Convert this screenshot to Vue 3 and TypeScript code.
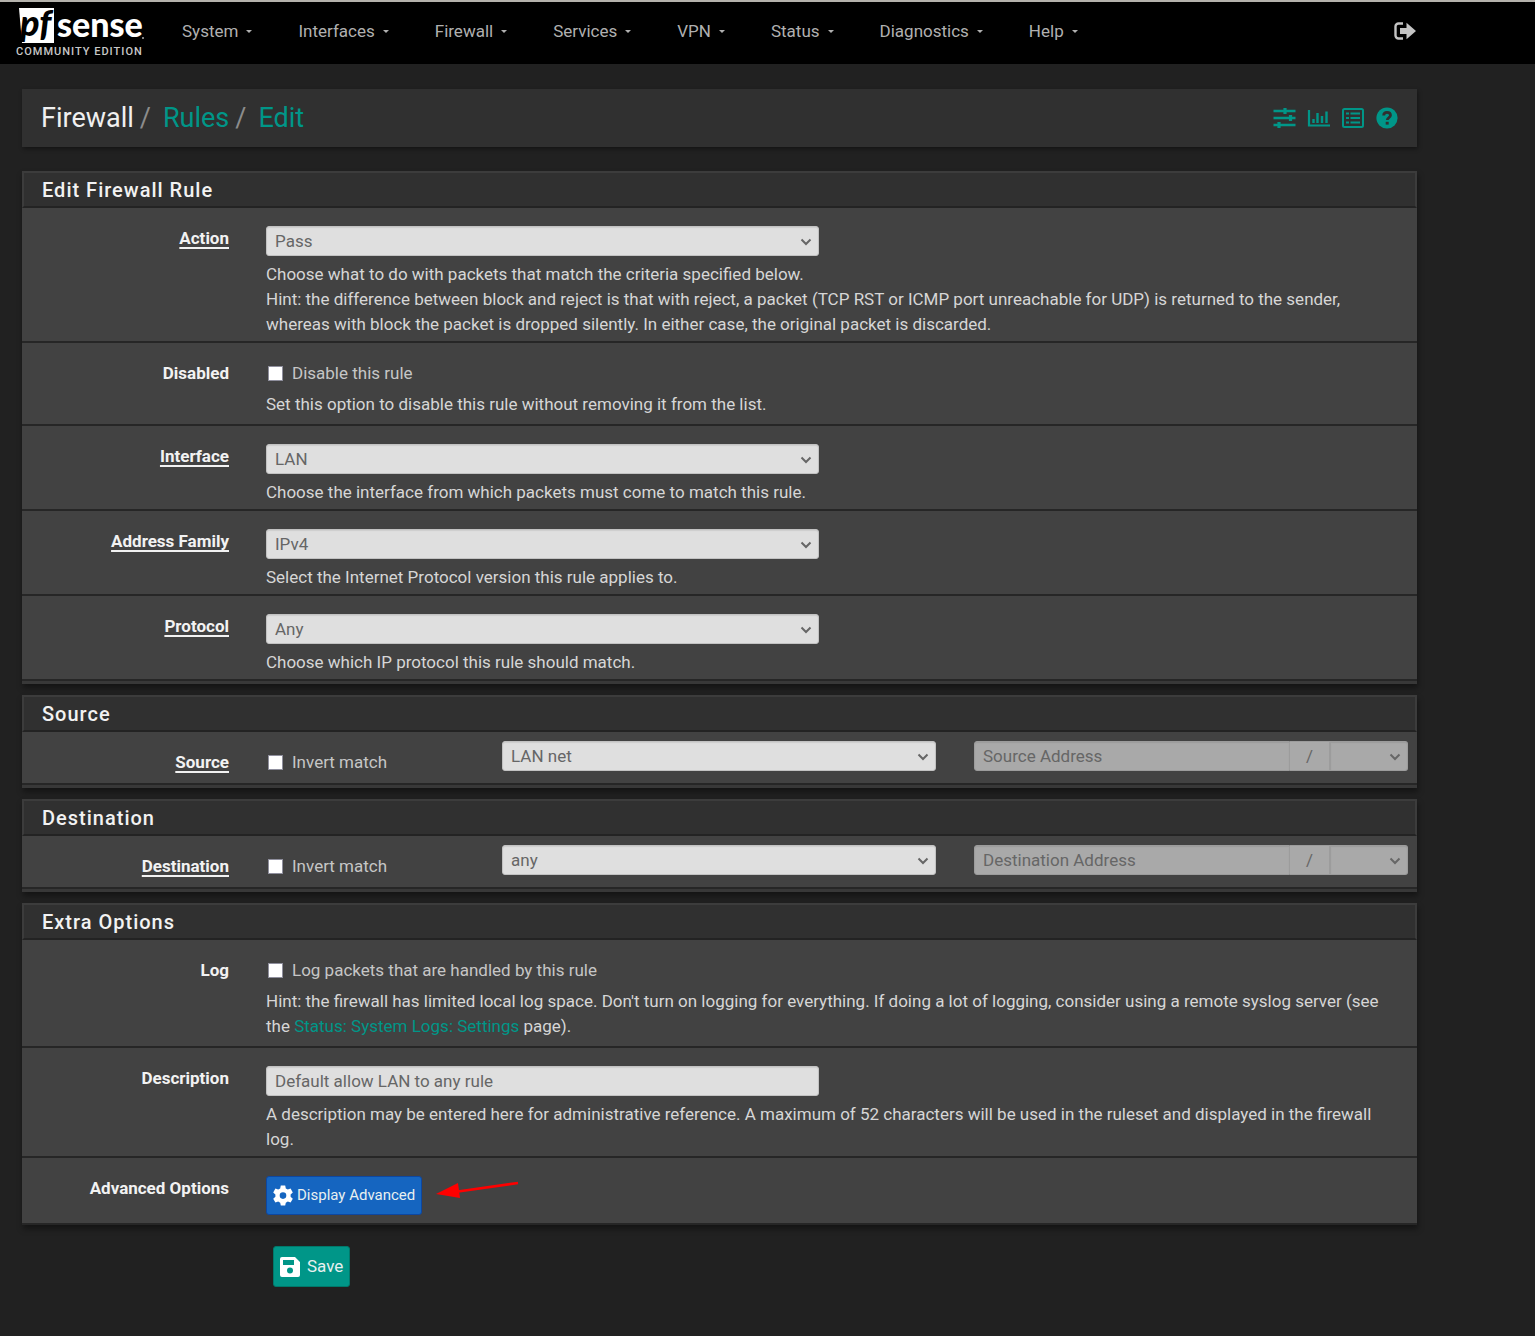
<script setup lang="ts">
import { ref } from 'vue'

interface EndpointRow {
  id: string
  title: string
  value: string
  placeholder: string
}

interface SelectRow {
  id: string
  label: string
  value: string
  help: string[]
}

const menus: string[] = ['System', 'Interfaces', 'Firewall', 'Services', 'VPN', 'Status', 'Diagnostics', 'Help']

const actionRow: SelectRow = {
  id: 'action',
  label: 'Action',
  value: 'Pass',
  help: [
    'Choose what to do with packets that match the criteria specified below.',
    'Hint: the difference between block and reject is that with reject, a packet (TCP RST or ICMP port unreachable for UDP) is returned to the sender, whereas with block the packet is dropped silently. In either case, the original packet is discarded.',
  ],
}

const matchRows: SelectRow[] = [
  { id: 'interface', label: 'Interface', value: 'LAN', help: ['Choose the interface from which packets must come to match this rule.'] },
  { id: 'family', label: 'Address Family', value: 'IPv4', help: ['Select the Internet Protocol version this rule applies to.'] },
  { id: 'protocol', label: 'Protocol', value: 'Any', help: ['Choose which IP protocol this rule should match.'] },
]

const endpoints: EndpointRow[] = [
  { id: 'source', title: 'Source', value: 'LAN net', placeholder: 'Source Address' },
  { id: 'destination', title: 'Destination', value: 'any', placeholder: 'Destination Address' },
]

const description = ref('Default allow LAN to any rule')
</script>

<template>
  <div class="page">
    <header class="navbar">
      <a href="#" class="logo" aria-label="pfSense Community Edition">
        <svg width="132" height="54" viewBox="0 0 132 54">
          <path d="M3 4h35v35H6z" fill="#fff" />
          <text x="4" y="32" class="logo-pf">pf</text>
          <text x="41" y="33" class="logo-sense">sense</text>
          <circle cx="127" cy="34" r="1" fill="#aaa" />
          <text x="0" y="51" class="logo-edition">COMMUNITY EDITION</text>
        </svg>
      </a>
      <nav class="menu">
        <a v-for="item in menus" :key="item" href="#" class="menu-item">{{ item }}<span class="caret"></span></a>
      </nav>
      <a href="#" class="logout" aria-label="Logout">
        <svg width="22" height="18" viewBox="0 0 22 18">
          <path d="M9 1.500H4.500a3 3 0 0 0-3 3v9a3 3 0 0 0 3 3H9" fill="none" stroke="#c4c4c4" stroke-width="2.400" />
          <path d="M6 6h6.500V0.800L22 9l-9.500 8.200V12H6z" fill="#c4c4c4" />
        </svg>
      </a>
    </header>

    <main class="content">
      <div class="crumbs">
        <nav class="trail">
          <span>Firewall</span><span class="slash">/</span><a href="#">Rules</a><span class="slash">/</span><a href="#">Edit</a>
        </nav>
        <div class="tools">
          <a href="#" aria-label="Settings">
            <svg width="24" height="22" viewBox="0 0 24 22">
              <path d="M0.500 4h22M0.500 11h22M0.500 18h22" stroke="currentColor" stroke-width="2.600" />
              <path d="M12 1v6M17.500 8v6M6 15v6" stroke="currentColor" stroke-width="3.200" />
            </svg>
          </a>
          <a href="#" aria-label="Status">
            <svg width="24" height="22" viewBox="0 0 24 22">
              <path d="M2 3v15.500h21" fill="none" stroke="currentColor" stroke-width="2.200" />
              <path d="M6.500 16v-4M10.500 16V6M15 16V9M19.500 16V4.500" stroke="currentColor" stroke-width="2.400" />
            </svg>
          </a>
          <a href="#" aria-label="Logs">
            <svg width="24" height="22" viewBox="0 0 24 22">
              <rect x="2" y="2" width="20" height="18" rx="1.500" fill="none" stroke="currentColor" stroke-width="2" />
              <path d="M5 6.500h3M5 11h3M5 15.500h3M9.500 6.500H19M9.500 11H19M9.500 15.500H19" stroke="currentColor" stroke-width="2" />
            </svg>
          </a>
          <a href="#" aria-label="Help">
            <svg width="24" height="22" viewBox="0 0 24 22">
              <circle cx="12" cy="11" r="10.600" fill="currentColor" />
              <path d="M8.700 8.600C8.700 6.400 10 5.400 12 5.400s3.500 1.100 3.500 2.900c0 2.400-3.200 2.200-3.200 4.700" fill="none" stroke="#303030" stroke-width="2.800" />
              <path d="M10.700 14.800h3v2.800h-3z" fill="#303030" />
            </svg>
          </a>
        </div>
      </div>

      <form class="form" @submit.prevent>
        <section class="panel">
          <h2 class="heading">Edit Firewall Rule</h2>
          <div class="row">
            <label class="label" :for="actionRow.id"><span class="required">{{ actionRow.label }}</span></label>
            <div class="field">
              <div class="pick half">
                <select :id="actionRow.id" class="control"><option>{{ actionRow.value }}</option></select>
                <svg class="chevron" width="12" height="8" viewBox="0 0 12 8"><path d="M1.500 1.500 6 6l4.500-4.500" /></svg>
              </div>
              <p class="help"><template v-for="(line, i) in actionRow.help" :key="i"><br v-if="i > 0">{{ line }}</template></p>
            </div>
          </div>
          <div class="row">
            <span class="label">Disabled</span>
            <div class="field ticks">
              <label class="tick"><input type="checkbox" class="box">Disable this rule</label>
              <p class="help">Set this option to disable this rule without removing it from the list.</p>
            </div>
          </div>
          <div v-for="row in matchRows" :key="row.id" class="row">
            <label class="label" :for="row.id"><span class="required">{{ row.label }}</span></label>
            <div class="field">
              <div class="pick half">
                <select :id="row.id" class="control"><option>{{ row.value }}</option></select>
                <svg class="chevron" width="12" height="8" viewBox="0 0 12 8"><path d="M1.500 1.500 6 6l4.500-4.500" /></svg>
              </div>
              <p class="help">{{ row.help[0] }}</p>
            </div>
          </div>
        </section>

        <section v-for="end in endpoints" :key="end.id" class="panel">
          <h2 class="heading">{{ end.title }}</h2>
          <div class="row">
            <label class="label" :for="end.id"><span class="required">{{ end.title }}</span></label>
            <div class="field endpoint">
              <label class="tick"><input type="checkbox" class="box">Invert match</label>
              <div class="pick">
                <select :id="end.id" class="control"><option>{{ end.value }}</option></select>
                <svg class="chevron" width="12" height="8" viewBox="0 0 12 8"><path d="M1.500 1.500 6 6l4.500-4.500" /></svg>
              </div>
              <div class="address">
                <input type="text" class="control address-text" disabled :placeholder="end.placeholder" :aria-label="end.placeholder">
                <span class="divider">/</span>
                <div class="pick mask">
                  <select class="control" disabled :aria-label="end.title + ' mask'"><option></option></select>
                  <svg class="chevron" width="12" height="8" viewBox="0 0 12 8"><path d="M1.500 1.500 6 6l4.500-4.500" /></svg>
                </div>
              </div>
            </div>
          </div>
        </section>

        <section class="panel last">
          <h2 class="heading">Extra Options</h2>
          <div class="row">
            <span class="label">Log</span>
            <div class="field ticks">
              <label class="tick"><input type="checkbox" class="box">Log packets that are handled by this rule</label>
              <p class="help">Hint: the firewall has limited local log space. Don't turn on logging for everything. If doing a lot of logging, consider using a remote syslog server (see the <a href="#">Status: System Logs: Settings</a> page).</p>
            </div>
          </div>
          <div class="row">
            <label class="label" for="descr">Description</label>
            <div class="field">
              <input id="descr" v-model="description" type="text" class="control half">
              <p class="help">A description may be entered here for administrative reference. A maximum of 52 characters will be used in the ruleset and displayed in the firewall log.</p>
            </div>
          </div>
          <div class="row">
            <span class="label">Advanced Options</span>
            <div class="field advanced">
              <button type="button" class="btn info">
                <svg width="20" height="22" viewBox="0 0 20 22">
                  <path fill="#fff" fill-rule="evenodd" d="M7.800 0.500h4.400l.6 2.900 2 1.100 2.800-.9 2.200 3.800-2.200 2v2.300l2.200 2-2.200 3.800-2.800-.9-2 1.100-.6 2.900H7.800l-.6-2.900-2-1.100-2.800.9-2.200-3.800 2.200-2V9.400l-2.200-2 2.200-3.800 2.800.9 2-1.100zM10 7.300a3.300 3.300 0 1 0 0 6.600 3.300 3.300 0 0 0 0-6.600z" />
                </svg>
                Display Advanced
              </button>
              <svg class="arrow" width="84" height="20" viewBox="0 0 84 20">
                <path d="M82 3 22 11.500" stroke="#f00" stroke-width="2.600" />
                <path d="M0 14 22 3l2 15z" fill="#f00" />
              </svg>
            </div>
          </div>
        </section>

        <button type="submit" class="btn save">
          <svg width="20" height="20" viewBox="0 0 20 20">
            <path fill="#fff" fill-rule="evenodd" d="M2 0h13l5 5v13a2 2 0 0 1-2 2H2a2 2 0 0 1-2-2V2a2 2 0 0 1 2-2zM3 3v5h11V3zM10 10.500a3 3 0 1 0 0 6 3 3 0 0 0 0-6z" />
          </svg>
          Save
        </button>
      </form>
    </main>
  </div>
</template>

<style>
body {
  margin: 0;
  background: #212121;
}
</style>

<style scoped>
.page {
  min-height: 100vh;
  background: #212121;
  color: #d6d6d6;
  font: 17px/25px Roboto, "Liberation Sans", sans-serif;
}

*,
*::before {
  box-sizing: border-box;
}

a {
  color: #009688;
  text-decoration: none;
}

svg {
  display: block;
  flex: none;
  overflow: visible;
}

.navbar {
  display: flex;
  align-items: center;
  height: 64px;
  padding: 0 119px 4px 16px;
  border-top: 2px solid #b4b2ac;
  background: #000;
}

.logo {
  margin-right: 34px;
}

.logo-pf {
  font: italic 900 36px Lato, sans-serif;
  fill: #000;
}

.logo-sense {
  font: 900 34px Lato, sans-serif;
  fill: #fff;
}

.logo-edition {
  font: 500 11px Roboto, sans-serif;
  letter-spacing: 1px;
  fill: #c8c8c8;
}

.menu {
  display: flex;
  flex: 1;
  gap: 46px;
}

.menu-item {
  display: flex;
  align-items: center;
  gap: 8px;
  color: #b0b0b0;
}

.caret {
  border: 3px solid transparent;
  border-top-color: currentColor;
  border-bottom: 0;
}

.content {
  margin: 25px 118px 0 22px;
}

.crumbs {
  display: flex;
  align-items: center;
  justify-content: space-between;
  height: 58px;
  padding: 0 18px 0 19px;
  background: #303030;
  box-shadow: 1px 2px 4px rgba(0, 0, 0, 0.4);
}

.trail {
  display: flex;
  font-size: 27px;
  line-height: 32px;
  color: #f0f0f0;
}

.slash {
  margin: 0 12px 0 6px;
  color: #8c8c8c;
}

.tools {
  display: flex;
  gap: 10px;
}

.form {
  padding-top: 24px;
}

.panel {
  margin-bottom: 11px;
  border-bottom: 3px solid #383838;
  background: #424242;
  box-shadow: 1px 4px 6px rgba(0, 0, 0, 0.4);
}

.heading {
  margin: 0;
  height: 37px;
  padding: 0 18px;
  border: 2px solid #3c3c3c;
  border-bottom-color: #232323;
  background: #303030;
  color: #f2f2f2;
  font-size: 20px;
  font-weight: 500;
  line-height: 35px;
  letter-spacing: 1px;
}

.row {
  display: flex;
  gap: 37px;
  padding-right: 9px;
  border-bottom: 2px solid #262626;
}

.label {
  width: 207px;
  flex: none;
  padding-top: 18px;
  color: #f2f2f2;
  font-weight: 700;
  text-align: right;
}

.required {
  text-decoration: underline;
  text-decoration-thickness: 2px;
  text-decoration-skip-ink: none;
  text-underline-offset: 3px;
}

.field {
  flex: 1;
  min-width: 0;
  padding: 18px 0 4px;
}

.help {
  margin: 6px 0 0;
  padding-right: 16px;
}

.ticks {
  padding-bottom: 7px;
}

.tick {
  display: flex;
  align-items: center;
  gap: 9px;
  color: #c6c6c6;
}

.box {
  appearance: none;
  width: 15px;
  height: 15px;
  margin: 0 0 0 2px;
  border: 1px solid #8f8f9d;
  background: #fff;
}

.box:checked {
  background: #009688;
}

.control {
  display: block;
  appearance: none;
  width: 100%;
  height: 30px;
  margin: 0;
  padding: 0 8px;
  border: 1px solid #c2c2c2;
  border-radius: 3px;
  background: #dfdfdf;
  color: #666;
  font: inherit;
  box-shadow: inset 0 1px 1px rgba(0, 0, 0, 0.08);
}

.half {
  width: calc(50% - 18px);
}

.pick {
  position: relative;
}

.chevron {
  position: absolute;
  top: 12px;
  right: 7px;
  fill: none;
  stroke: #666;
  stroke-width: 2;
  pointer-events: none;
}

.endpoint {
  display: grid;
  grid-template-columns: 198px 1fr 1fr;
  column-gap: 38px;
  padding: 9px 0 8px;
}

.endpoint .tick {
  padding-top: 9px;
}

.address {
  display: flex;
}

.address .control {
  border-color: #9c9c9c;
  background: #a9a9a9;
  color: #666;
  opacity: 1;
}

.address .address-text {
  flex: 1;
  width: auto;
  min-width: 0;
  border-radius: 3px 0 0 3px;
}

.address-text::placeholder {
  color: #666;
  opacity: 1;
}

.divider {
  width: 39px;
  height: 30px;
  border: solid #9c9c9c;
  border-width: 1px 0;
  background: #a9a9a9;
  color: #666;
  line-height: 28px;
  text-align: center;
}

.mask {
  width: 79px;
}

.mask .control {
  border-left-width: 2px;
  border-radius: 0 3px 3px 0;
}

.btn {
  display: flex;
  align-items: center;
  padding: 0 6px;
  border: 1px solid;
  border-radius: 3px;
  color: #e8f0f0;
  font: inherit;
}

.advanced {
  display: flex;
  align-items: center;
  gap: 14px;
  padding-bottom: 8px;
}

.info {
  height: 39px;
  gap: 4px;
  border-color: #0d47a1;
  background: #1565c0;
  font-size: 15px;
}

.arrow {
  margin-bottom: 12px;
}

.last {
  margin-bottom: 21px;
  border-bottom: 0;
}

.save {
  height: 41px;
  margin-left: 251px;
  gap: 7px;
  border-color: #00796b;
  background: #009688;
}
</style>
